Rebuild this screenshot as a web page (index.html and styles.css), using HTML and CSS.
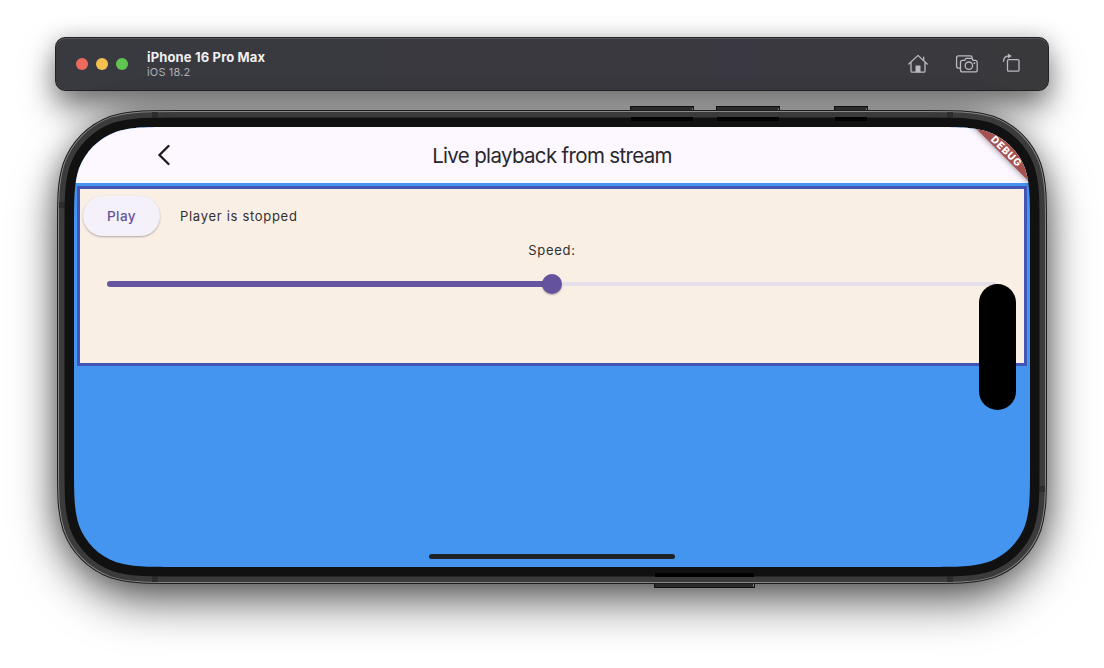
FILE: index.html
```
<!DOCTYPE html>
<html lang="en">
<head>
<meta charset="utf-8">
<title>iPhone 16 Pro Max</title>
<link rel="stylesheet" href="styles.css">
</head>
<body>
<header class="toolbar">
  <div class="lights"><i class="light red"></i><i class="light yellow"></i><i class="light green"></i></div>
  <div class="device">
    <div class="device-name">iPhone 16 Pro Max</div>
    <div class="device-os">iOS 18.2</div>
  </div>
  <div class="tools">
    <svg class="tool" viewBox="0 0 24 22"><path d="M2.800 11 12 2.400l9.200 8.600M17.700 7.400V4.200M5 9.800v8.200q0 1.200 1.200 1.200h11.600q1.200 0 1.200-1.200V9.800"/><path class="solid" d="M9.500 19.200v-5.800q0-.8.8-.8h3.400q.8 0 .8.800v5.800z"/></svg>
    <svg class="tool" viewBox="0 0 24 22"><path d="M4.800 15.200H3.600q-2 0-2-2V4.800q0-2 2-2h11.600q1.800 0 2 1.800M7.500 7.300h2.200l1.200-1.900h6l1.200 1.900h2.100q2 0 2 2v7.600q0 2-2 2H7.500q-2 0-2-2V9.300q0-2 2-2z"/><circle cx="13.900" cy="12.700" r="3.700"/><circle class="solid" cx="19.400" cy="10.200" r=".9"/></svg>
    <svg class="tool rotate" viewBox="0 0 24 22"><rect x="7.500" y="6.600" width="11.500" height="11.500" rx="1.200"/><path d="M3.600 8.300c0-3.800 1.500-5.200 4.900-5.200"/><path class="solid" d="M7.900.6v5l3.900-2.500z"/></svg>
  </div>
</header>

<main class="phone">
  <div class="phone-shadow"></div>
  <svg class="frame" viewBox="-20 -24 996 488">
    <defs>
      <path id="edge" d="M100.900 0H855.100C884.200 0 898.700 0 914.300 4.900C931.400 11.200 944.800 24.600 951.100 41.700C956 57.300 956 71.800 956 100.900V339.100C956 368.200 956 382.700 951.100 398.300C944.800 415.400 931.400 428.800 914.300 435.100C898.700 440 884.200 440 855.100 440H100.900C71.800 440 57.300 440 41.700 435.100C24.600 428.800 11.200 415.400 4.900 398.300C0 382.700 0 368.200 0 339.100V100.900C0 71.800 0 57.300 4.900 41.700C11.200 24.600 24.600 11.200 41.700 4.900C57.300 0 71.800 0 100.900 0Z"/>
    </defs>
    <g class="keys">
      <rect x="556.500" y="-20.500" width="63" height="8"/><rect x="642.500" y="-20.500" width="63" height="8"/><rect x="760.500" y="-20.500" width="33" height="8"/><rect x="580.500" y="452.500" width="100" height="8"/>
    </g>
    <path class="key-shine" d="M618.500-19v4M704.500-19v4M792.500-19v4M679.500 456v4"/>
    <use href="#edge" class="outline"/>
    <use href="#edge" class="rim"/>
    <use href="#edge" class="band"/>
    <path class="seams" d="M78-15h6v6h-6zM873-15h6v6h-6zM78 449h6v6h-6zM873 449h6v6h-6zM-15 75h6v6h-6zM965 359h6v6h-6z"/>
    <use href="#edge" class="bezel"/>
    <path class="slots" d="M557-10h62v4h-62zM643-10h62v4h-62zM761-10h32v4h-32zM581 446h99v4h-99z"/>
  </svg>

  <div class="screen">
    <div class="appbar">
      <svg class="back" viewBox="0 0 16 22"><path d="M12.500 2 3.500 11l9 9"/></svg>
      <h1 class="title">Live playback from stream</h1>
    </div>
    <section class="panel">
      <div class="controls">
        <button class="play">Play</button>
        <span class="status">Player is stopped</span>
      </div>
      <div class="speed">Speed:</div>
      <div class="slider"><div class="track-on"></div><div class="thumb"></div><div class="track-off"></div></div>
    </section>
    <div class="home-bar"></div>
    <div class="debug"><span>DEBUG</span></div>
    <div class="island"></div>
  </div>
</main>
</body>
</html>
```

FILE: styles.css
```
* { box-sizing: border-box; }
body {
  margin: 0;
  width: 1104px;
  height: 668px;
  overflow: hidden;
  background: #fff;
  padding: 37px 55px 0;
  font-family: Inter, "Liberation Sans", sans-serif;
}
.toolbar {
  display: flex;
  align-items: center;
  height: 54px;
  padding: 0 20px;
  border-radius: 10px;
  border: 1px solid #222225;
  background: linear-gradient(90deg, #393940, #3a3941 70%, #39393c);
  box-shadow: inset 0 1px 0 #55555b, 0 18px 32px rgba(0,0,0,.5), 0 0 22px rgba(0,0,0,.18);
}
.lights { display: flex; gap: 8px; }
.light { width: 12px; height: 12px; border-radius: 50%; }
.red { background: #ed6a5e; }
.yellow { background: #f5bf4f; }
.green { background: #61c554; }
.device { margin-left: 19px; }
.device-name { font-size: 13px; line-height: 15px; font-weight: 700; color: #f0f0f1; letter-spacing: .15px; }
.device-os { font-size: 11px; line-height: 14px; color: #b0b0b5; letter-spacing: .15px; }
.tools { display: flex; gap: 25px; margin-left: auto; padding-right: 4px; }
.tool { width: 24px; height: 22px; fill: none; stroke: #b9b9c2; stroke-width: 1.300; stroke-linecap: round; stroke-linejoin: round; }
.tool.rotate { margin-left: -4px; }
.tool .solid { fill: #b9b9c2; stroke: none; }

.phone { position: relative; padding: 36px 19px 0; }
.phone-shadow {
  position: absolute;
  left: 3px; top: 20px;
  width: 988px; height: 472px;
  border-radius: 90px;
  box-shadow: 0 20px 46px rgba(0,0,0,.56), 0 0 30px rgba(0,0,0,.38);
}
.frame { position: absolute; left: -1px; top: 12px; width: 996px; height: 488px; }
.keys { fill: #2a2b2a; stroke: #111; }
.key-shine { stroke: #777; }
.outline, .rim, .band, .bezel { fill: none; }
.outline { stroke: #1c1c1c; stroke-width: 34px; }
.rim { stroke: #888885; stroke-width: 32px; }
.band { stroke: #3b3b3b; stroke-width: 30px; }
.bezel { stroke: #111; stroke-width: 19px; }
.seams { fill: #2d2d2d; }
.slots { fill: #000; }

.screen {
  position: relative;
  width: 956px;
  height: 440px;
  background: #4495ef;
  clip-path: path("M100.9 0H855.1C884.2 0 898.7 0 914.3 4.9C931.4 11.2 944.8 24.6 951.1 41.7C956 57.3 956 71.8 956 100.9V339.1C956 368.2 956 382.7 951.1 398.3C944.8 415.4 931.4 428.8 914.3 435.1C898.7 440 884.2 440 855.1 440H100.9C71.8 440 57.3 440 41.7 435.1C24.6 428.8 11.2 415.4 4.9 398.3C0 382.7 0 368.2 0 339.1V100.9C0 71.8 0 57.3 4.9 41.7C11.2 24.6 24.6 11.2 41.7 4.9C57.3 0 71.8 0 100.9 0Z");
}
.appbar {
  display: grid;
  grid-template-columns: 82px 1fr 82px;
  align-items: center;
  height: 56px;
  background: #fdf7ff;
}
.back { width: 16px; height: 22px; justify-self: end; margin-right: -16px; fill: none; stroke: #1d1b20; stroke-width: 2.300; stroke-linecap: round; }
.title { text-align: center; white-space: nowrap; font-size: 20.500px; font-weight: 400; color: #29272c; letter-spacing: -.660px; }
.panel {
  height: 180px;
  margin: 3px 3px 0;
  padding: 6px 3px 0;
  border: 3px solid #4355b5;
  background: #f9efe5;
}
.controls { display: flex; align-items: center; height: 41px; }
.play {
  width: 77px;
  height: 40px;
  border: 0;
  border-radius: 20px;
  padding: 0;
  background: #f5f1fa;
  box-shadow: 0 1px 2px rgba(0,0,0,.3);
  font: 500 13.500px Inter, "Liberation Sans", sans-serif;
  letter-spacing: .4px;
  color: #65529f;
}
.status { margin-left: 20px; font-size: 13px; letter-spacing: .700px; color: #303030; }
.speed { margin-top: 4px; text-align: center; font-size: 13px; line-height: 20px; letter-spacing: .700px; color: #303030; }
.slider { display: flex; align-items: center; margin: 14px 24px 0; height: 20px; }
.track-on { width: 437px; margin-right: -2px; height: 6px; border-radius: 3px 0 0 3px; background: #6554a0; }
.thumb { width: 20px; height: 20px; border-radius: 50%; background: #65529f; box-shadow: 0 1px 2px rgba(0,0,0,.3); }
.track-off { flex: 1; height: 4px; border-radius: 0 2px 2px 0; background: #e5dfea; }
.home-bar { position: absolute; left: 355px; top: 427px; width: 246px; height: 5px; border-radius: 3px; background: #202326; }
.island { position: absolute; left: 905px; top: 157px; width: 37px; height: 126px; border-radius: 19px; background: #000; }
.debug {
  position: absolute;
  left: 872px; top: 18px;
  width: 122px; height: 12px;
  transform: rotate(45deg);
  background: #a6504f;
  box-shadow: 0 0 6px rgba(0,0,0,.5);
  color: #fff;
  text-align: center;
  font-size: 10px;
  line-height: 12px;
  font-weight: 800;
  letter-spacing: .900px;
}
```
